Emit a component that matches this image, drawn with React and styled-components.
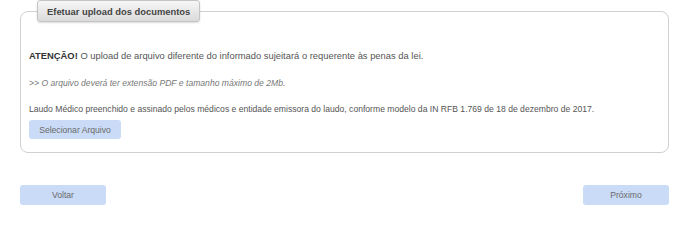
import React from 'react';
import styled, { createGlobalStyle } from 'styled-components';

const GlobalStyle = createGlobalStyle`
  body {
    margin: 0;
    background: #fff;
    font-family: "Liberation Sans", Arial, sans-serif;
  }
`;

const Page = styled.div`
  padding: 0 18px 0 20px;
`;

const Fieldset = styled.fieldset`
  margin: 0;
  padding: 0 8px 13px 8px;
  border: 1px solid #d0d0d0;
  border-radius: 8px;
  min-width: 0;
`;

const Legend = styled.legend`
  margin-left: 8px;
  padding: 0 9px;
  height: 22px;
  line-height: 21px;
  box-sizing: border-box;
  font-size: 9.4px;
  font-weight: bold;
  color: #444;
  background: linear-gradient(#f7f7f7, #dadada);
  border: 1px solid #c4c4c4;
  border-radius: 3px;
  box-shadow: 0 1px 2px rgba(0, 0, 0, 0.15);
`;

const Line = styled.p`
  margin: ${p => p.$top}px 0 0 0;
  font-size: ${p => p.$size}px;
  line-height: 14px;
  color: ${p => p.$color};
  font-style: ${p => (p.$italic ? 'italic' : 'normal')};
  white-space: nowrap;
`;

const Strong = styled.b`
  color: #333;
`;

const Button = styled.button`
  width: ${p => p.$width}px;
  height: ${p => p.$height}px;
  padding: 0;
  border: none;
  border-radius: 3px;
  background: #c9dbf6;
  color: #6a6a6a;
  font-family: "Liberation Sans", Arial, sans-serif;
  font-size: 8.6px;
`;

const FileButton = styled(Button)`
  margin-top: 4px;
`;

const Actions = styled.div`
  display: flex;
  justify-content: space-between;
  margin-top: 32px;
`;

export default function App() {
  return (
    <>
      <GlobalStyle />
      <Page>
        <Fieldset>
          <Legend>Efetuar upload dos documentos</Legend>
          <Line $top={27} $size={9.4} $color="#555">
            <Strong>ATENÇÃO!</Strong> O upload de arquivo diferente do informado sujeitará o requerente às penas da lei.
          </Line>
          <Line $top={13} $size={8.6} $color="#777" $italic>
            &gt;&gt; O arquivo deverá ter extensão PDF e tamanho máximo de 2Mb.
          </Line>
          <Line $top={12} $size={8.6} $color="#555">
            Laudo Médico preenchido e assinado pelos médicos e entidade emissora do laudo, conforme modelo da IN RFB 1.769 de 18 de dezembro de 2017.
          </Line>
          <FileButton $width={92} $height={19}>Selecionar Arquivo</FileButton>
        </Fieldset>
        <Actions>
          <Button $width={86} $height={20}>Voltar</Button>
          <Button $width={86} $height={20}>Próximo</Button>
        </Actions>
      </Page>
    </>
  );
}
